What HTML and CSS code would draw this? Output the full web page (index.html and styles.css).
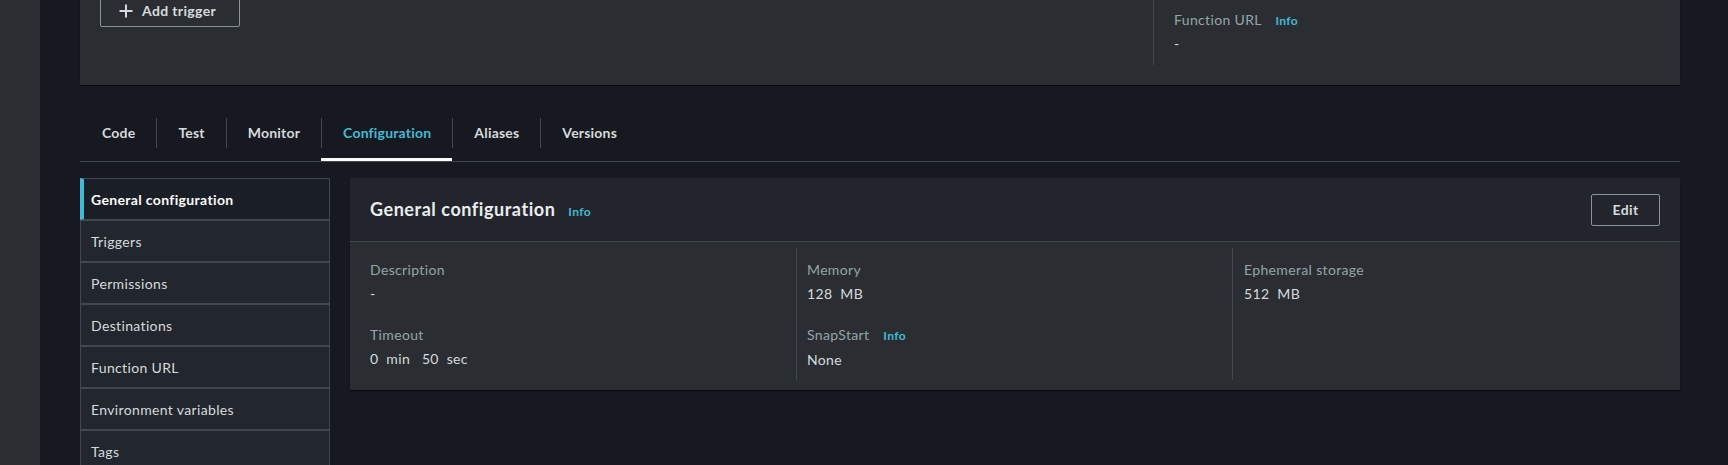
FILE: index.html
```html
<!DOCTYPE html>
<html lang="en">
<head>
<meta charset="utf-8">
<title>Lambda configuration</title>
<link rel="stylesheet" href="styles.css">
</head>
<body>
<div class="app">
  <div class="rail"></div>
  <main class="main">
    <section class="top-card">
      <div class="top-left">
        <button class="btn btn-icon">
          <svg class="plus" width="16" height="16" viewBox="0 0 16 16" aria-hidden="true"><path d="M8 1.5v13M1.5 8h13" stroke="currentColor" stroke-width="2" fill="none"/></svg>
          <span>Add trigger</span>
        </button>
      </div>
      <div class="top-right">
        <div class="kv-label">Function URL <a class="info">Info</a></div>
        <div class="kv-value">-</div>
      </div>
    </section>

    <nav class="tabs">
      <div class="tab"><span class="tab-label first">Code</span></div>
      <div class="tab"><span class="tab-label">Test</span></div>
      <div class="tab"><span class="tab-label">Monitor</span></div>
      <div class="tab active"><span class="tab-label">Configuration</span></div>
      <div class="tab"><span class="tab-label">Aliases</span></div>
      <div class="tab"><span class="tab-label">Versions</span></div>
    </nav>

    <div class="config">
      <ul class="side">
        <li class="side-item active">General configuration</li>
        <li class="side-item">Triggers</li>
        <li class="side-item">Permissions</li>
        <li class="side-item">Destinations</li>
        <li class="side-item">Function URL</li>
        <li class="side-item">Environment variables</li>
        <li class="side-item">Tags</li>
        <li class="side-item">VPC</li>
      </ul>

      <section class="panel">
        <header class="panel-head">
          <h2 class="panel-title">General configuration <a class="info">Info</a></h2>
          <button class="btn btn-edit">Edit</button>
        </header>
        <div class="panel-body">
          <div class="col">
            <div class="kv">
              <div class="kv-label">Description</div>
              <div class="kv-value">-</div>
            </div>
            <div class="kv">
              <div class="kv-label">Timeout</div>
              <div class="kv-value">0&nbsp; min &nbsp; 50&nbsp; sec</div>
            </div>
          </div>
          <div class="col">
            <div class="kv">
              <div class="kv-label">Memory</div>
              <div class="kv-value">128&nbsp; MB</div>
            </div>
            <div class="kv">
              <div class="kv-label">SnapStart <a class="info">Info</a></div>
              <div class="kv-value">None</div>
            </div>
          </div>
          <div class="col">
            <div class="kv">
              <div class="kv-label">Ephemeral storage</div>
              <div class="kv-value">512&nbsp; MB</div>
            </div>
          </div>
        </div>
      </section>
    </div>
  </main>
</div>
</body>
</html>
```

FILE: styles.css
```css
* { box-sizing: border-box; }

html, body {
  margin: 0;
  padding: 0;
  height: 100%;
  overflow: hidden;
}

body {
  background: #16191f;
  color: #d5dbdb;
  font-family: Lato, "Liberation Sans", sans-serif;
  font-size: 14px;
  line-height: 20px;
  letter-spacing: 0.35px;
}

.app {
  display: flex;
  min-height: 100vh;
}

.rail {
  width: 40px;
  flex: 0 0 40px;
  background: #2a2e33;
}

.main {
  flex: 1;
  padding: 0 48px 0 40px;
}

/* top card (scrolled partly out of view) */
.top-card {
  margin-top: -25px;
  height: 110px;
  padding: 20px 0 20px 20px;
  background: #2a2e33;
  box-shadow: 0 1px 1px rgba(0, 0, 0, 0.6);
  display: flex;
  justify-content: space-between;
}

.top-right {
  width: 527px;
  border-left: 1px solid #414750;
  padding: 14px 20px 0 20px;
}

.top-right .kv-value { margin-top: 3px; }

.btn {
  font-family: inherit;
  font-size: 14px;
  font-weight: 700;
  line-height: 20px;
  letter-spacing: 0.35px;
  color: #d5dbdb;
  background: transparent;
  border: 1px solid #879596;
  border-radius: 2px;
  height: 32px;
  padding: 0 19px;
  cursor: pointer;
}

.btn-edit {
  width: 69px;
  padding: 0;
  text-align: center;
}

.btn-icon {
  display: flex;
  align-items: center;
  gap: 8px;
  padding: 0 20px 0 17px;
  width: 140px;
}

.plus { display: block; color: #d5dbdb; }

.info {
  color: #44b9d6;
  font-size: 12px;
  font-weight: 700;
  margin-left: 10px;
  text-decoration: none;
}

.kv-label {
  color: #95a5a6;
  padding-top: 1px;
}

.kv-value {
  color: #d5dbdb;
  margin-top: 4px;
  white-space: pre;
}

/* tabs */
.tabs {
  margin-top: 20px;
  display: flex;
  border-bottom: 1px solid #414750;
}

.tab {
  padding: 13px 0 10px;
  border-bottom: 3px solid transparent;
  font-weight: 700;
  letter-spacing: 0.2px;
  color: #d5dbdb;
}

.tab-label {
  display: block;
  padding: 5px 21px;
  border-left: 1px solid #414750;
}

.tab-label.first { border-left-color: transparent; }

.tab.active {
  border-bottom-color: #fafafa;
  color: #44b9d6;
}

/* configuration area */
.config {
  margin-top: 16px;
  display: flex;
  align-items: flex-start;
  gap: 20px;
}

.side {
  list-style: none;
  margin: 0;
  padding: 0;
  width: 250px;
  flex: 0 0 250px;
}

.side-item {
  height: 42px;
  display: flex;
  align-items: center;
  padding: 1px 0 0 10px;
  background: #22262d;
  border: 1px solid #414750;
  color: #d5dbdb;
}

.side-item.active {
  background: #1a1f27;
  border-left: 4px solid #44b9d6;
  padding-left: 7px;
  font-weight: 700;
  color: #fafafa;
}

.panel {
  flex: 1;
  background: #2a2e33;
  box-shadow: 0 1px 1px rgba(0, 0, 0, 0.6);
}

.panel-head {
  height: 64px;
  padding: 0 20px;
  display: flex;
  align-items: center;
  justify-content: space-between;
  background: #22262c;
  border-bottom: 1px solid #414750;
}

.panel-title {
  margin: 0;
  font-size: 18px;
  line-height: 24px;
  font-weight: 700;
  letter-spacing: 0.55px;
  color: #eaeded;
  display: flex;
  align-items: baseline;
  padding-top: 1px;
}

.panel-title .info { margin-left: 13px; letter-spacing: 0.35px; }

.panel-body {
  padding: 6px 20px 10px;
  display: grid;
  grid-template-columns: 426fr 436fr 428fr;
}

.col {
  padding: 11px 0 10px;
  min-height: 132px;
}

.col + .col {
  border-left: 1px solid #414750;
  padding-left: 10px;
}

.col:last-child { padding-left: 11px; }

.kv + .kv { margin-top: 20px; }
```
